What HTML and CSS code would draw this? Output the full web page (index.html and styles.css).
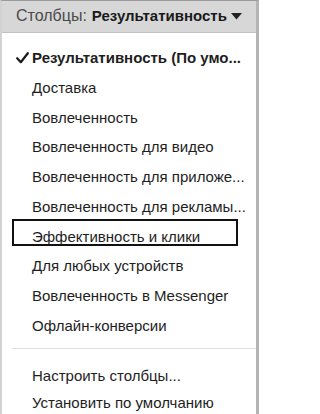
FILE: index.html
```html
<!DOCTYPE html>
<html lang="ru">
<head>
<meta charset="utf-8">
<link rel="stylesheet" href="styles.css">
</head>
<body>
<div class="panel">
  <div class="header">
    <span class="label">Столбцы:</span>
    <span class="value">Результативность</span>
    <svg class="caret" width="11" height="7" viewBox="0 0 11 7"><path d="M0 0 H11 L5.5 6.5 Z" fill="#222"/></svg>
  </div>
  <ul class="menu">
    <li class="item selected"><svg class="check" width="13" height="12" viewBox="0 0 13 12"><path d="M1.2 6.2 L4.8 10.2 L11.8 1.2" fill="none" stroke="#1a1a1a" stroke-width="2.2" stroke-linecap="round" stroke-linejoin="round"/></svg>Результативность (По умо...</li>
    <li class="item">Доставка</li>
    <li class="item">Вовлеченность</li>
    <li class="item">Вовлеченность для видео</li>
    <li class="item">Вовлеченность для приложе...</li>
    <li class="item">Вовлеченность для рекламы...</li>
    <li class="item boxed">Эффективность и клики</li>
    <li class="item">Для любых устройств</li>
    <li class="item">Вовлеченность в Messenger</li>
    <li class="item">Офлайн-конверсии</li>
  </ul>
  <div class="sep"></div>
  <ul class="menu footer">
    <li class="item">Настроить столбцы...</li>
    <li class="item">Установить по умолчанию</li>
  </ul>
</div>
</body>
</html>
```

FILE: styles.css
```css
* { box-sizing: border-box; }
html, body { margin: 0; padding: 0; background: #fff; }
body { font-family: "Liberation Sans", Arial, sans-serif; color: #1e1e1e; }
.panel {
  width: 259px;
  height: 414px;
  border-left: 2px solid #d2d2d2;
  border-right: 3px solid #b4b4b4;
  border-top: 1px solid #9a9a9a;
  overflow: hidden;
}
.header {
  height: 32px;
  background: #d7d7d7;
  border-bottom: 1px solid #c2c2c2;
  display: flex;
  align-items: center;
  padding: 0 0 2px 14px;
  white-space: nowrap;
}
.label { color: #4a4a4a; font-size: 16px; }
.value { font-weight: bold; color: #1a1a1a; margin-left: 5px; font-size: 15px; }
.caret { margin-left: 4px; margin-top: 2px; }
.menu {
  list-style: none;
  margin: 0;
  padding: 10px 0 0 0;
}
.item {
  height: 29.7px;
  display: flex;
  align-items: center;
  padding-left: 30px;
  font-size: 15px;
  white-space: nowrap;
  position: relative;
}
.selected { font-weight: bold; }
.check {
  position: absolute;
  left: 14px;
  top: 9px;
}
.boxed {
  height: 27px;
  margin: -2px 18px 4.7px 10px;
  padding: 7px 0 0 18px;
  align-items: flex-start;
  line-height: 17px;
  border: 2px solid #111;
}
.sep {
  height: 1px;
  background: #e0e0e0;
  margin: 8.5px 0 0 10px;
}
.footer { padding-top: 12.5px; }
.footer .item { height: 27px; }
```
